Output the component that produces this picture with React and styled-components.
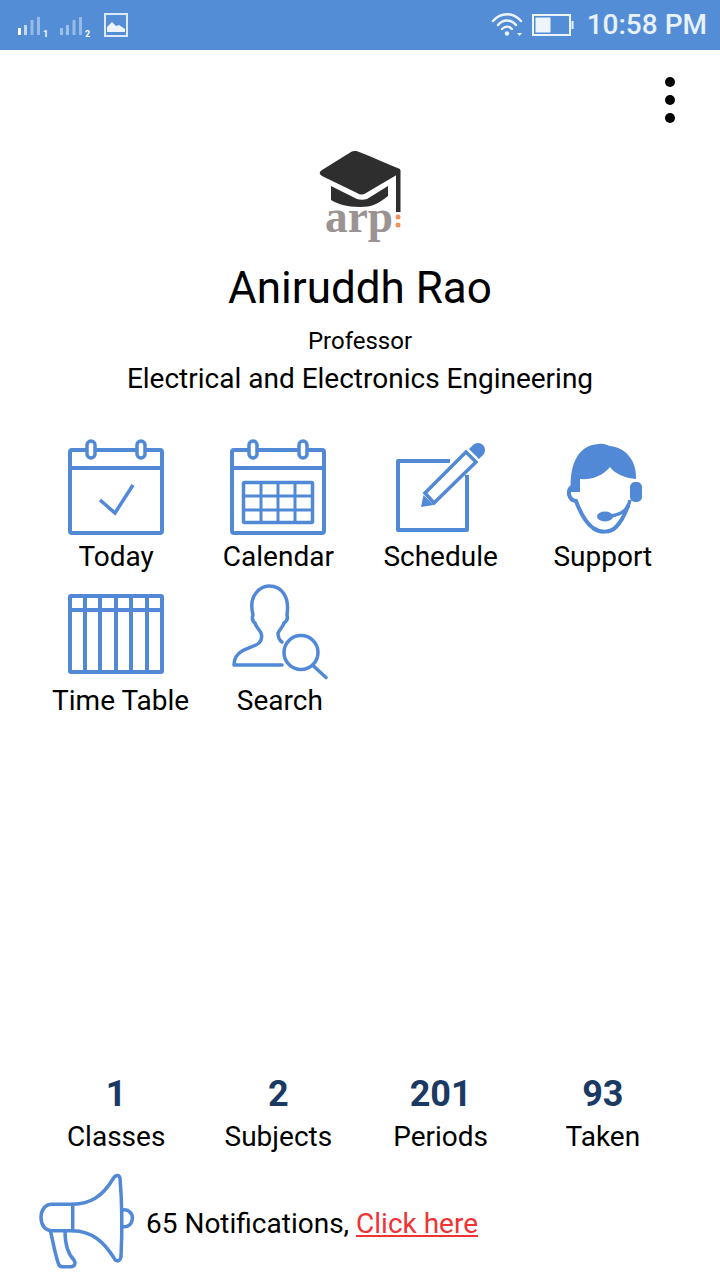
import React from 'react'
import styled, { createGlobalStyle } from 'styled-components'

const BLUE = '#5289d6'

const GlobalStyle = createGlobalStyle`
  html, body {
    margin: 0;
    background: #fff;
  }
  body {
    font-family: Roboto, "Liberation Sans", sans-serif;
    color: #000;
  }
`

const Page = styled.div`
  width: 720px;
  height: 1280px;
  display: flex;
  flex-direction: column;
  overflow: hidden;
`

const StatusBar = styled.div`
  height: 50px;
  flex: none;
  background: #538dd6;
  display: flex;
  align-items: center;
  justify-content: space-between;
  padding: 0 13px 0 18px;
  color: #e8f1fb;
`

const StatusGroup = styled.div`
  display: flex;
  align-items: center;
`

const Clock = styled.span`
  font-size: 28px;
  font-weight: 500;
  line-height: 50px;
  margin-left: 13px;
`

const SignalIcon = styled.svg`
  width: 32px;
  height: 34px;
  display: block;
  margin-right: ${(p) => p.$gap}px;
  fill: #fff;
`

const TopRow = styled.div`
  height: 98px;
  flex: none;
  box-sizing: border-box;
  padding: 27px 45px 0 0;
  display: flex;
  justify-content: flex-end;
`

const Kebab = styled.div`
  display: flex;
  flex-direction: column;
  gap: 8px;
`

const Dot = styled.span`
  width: 10px;
  height: 10px;
  border-radius: 50%;
  background: #000;
`

const Profile = styled.div`
  display: flex;
  flex-direction: column;
  align-items: center;
  flex: none;
`

const Name = styled.h1`
  margin: 19px 0 0;
  font-size: 44px;
  line-height: 50px;
  font-weight: 400;
`

const Role = styled.div`
  margin-top: 14px;
  font-size: 24px;
  line-height: 28px;
`

const Department = styled.div`
  margin-top: 7px;
  font-size: 28px;
  line-height: 34px;
`

const Grid = styled.div`
  margin: 42px 0 0 35px;
  width: 649px;
  display: grid;
  grid-template-columns: repeat(4, 1fr);
  row-gap: 9px;
  flex: none;
`

const Tile = styled.div`
  display: flex;
  flex-direction: column;
  align-items: center;
`

const TileIcon = styled.svg`
  width: 100px;
  height: 100px;
  display: block;
  fill: none;
  stroke: ${BLUE};
  stroke-width: 4;
`

const TileLabel = styled.div`
  margin: 3px 0 0 ${(p) => p.$shift || 0}px;
  font-size: 28px;
  line-height: 32px;
  white-space: nowrap;
`

const Stats = styled.div`
  margin: auto 0 0 35px;
  width: 649px;
  display: grid;
  grid-template-columns: repeat(4, 1fr);
  flex: none;
`

const Stat = styled.div`
  display: flex;
  flex-direction: column;
  align-items: center;
`

const StatValue = styled.div`
  font-size: 36px;
  line-height: 40px;
  font-weight: 700;
  color: #1b3a63;
`

const StatLabel = styled.div`
  margin-top: 7px;
  font-size: 28px;
  line-height: 32px;
`

const Footer = styled.div`
  margin-top: 19px;
  padding: 0 0 10px 38px;
  display: flex;
  align-items: center;
  flex: none;
`

const Megaphone = styled.svg`
  width: 98px;
  height: 98px;
  display: block;
  fill: none;
  stroke: ${BLUE};
  stroke-width: 3.5;
  stroke-linejoin: round;
  stroke-linecap: round;
`

const Notice = styled.div`
  margin: 6px 0 0 10px;
  font-size: 28px;
  line-height: 32px;
`

const NoticeLink = styled.a`
  color: #f03333;
  text-decoration: underline;
`

const Signal = ({ digit, faded, gap }) => (
  <SignalIcon viewBox="0 0 32 34" $gap={gap}>
    <rect x="0" y="20" width="3" height="7" opacity={faded ? 0.45 : 1} />
    <rect x="6" y="17" width="3" height="10" opacity={faded ? 0.45 : 0.65} />
    <rect x="12.5" y="12" width="3" height="15" opacity="0.4" />
    <rect x="19" y="9" width="3" height="18" opacity="0.4" />
    <text x="25" y="29" fontSize="9" fontWeight="700" fontFamily="Roboto">{digit}</text>
  </SignalIcon>
)

const ImageGlyph = () => (
  <svg width="24" height="24" viewBox="0 0 24 24" style={{ marginLeft: 2 }}>
    <rect x="1" y="1" width="22" height="22" fill="none" stroke="#dbe8f8" strokeWidth="2" />
    <path d="M3 19 V14 L8 9 L12 13 L15 12 L21 16 V19 Z" fill="#eef4fc" />
  </svg>
)

const Wifi = () => (
  <svg width="32" height="24" viewBox="0 0 32 24" fill="none" stroke="#eef4fc" strokeWidth="2.4" strokeLinecap="round">
    <path d="M2 8 C10 -1 22 -1 30 8" />
    <path d="M7 12 C12 6 20 6 25 12" />
    <path d="M11 16 C14 13 18 13 21 16" />
    <circle cx="16" cy="20.5" r="2.2" fill="#eef4fc" stroke="none" />
    <path d="M26 20 H31 L28.5 23 Z" fill="#eef4fc" stroke="none" />
  </svg>
)

const Battery = () => (
  <svg width="42" height="22" viewBox="0 0 42 22" style={{ marginLeft: 9 }}>
    <rect x="1" y="1" width="37" height="20" fill="none" stroke="#eef4fc" strokeWidth="2" />
    <rect x="3.5" y="3.5" width="15" height="15" fill="#eef4fc" />
    <rect x="39.5" y="7" width="2" height="8" fill="#eef4fc" />
  </svg>
)

const Logo = () => (
  <svg width="90" height="96" viewBox="315 148 90 96" style={{ display: 'block' }}>
    <path
      d="M355 151 C358 151 362 153 400 169 L400 173 L366 193 C363 195 360 195 357 193 L322 176 C319 174 319 172 322 170 L351 152 C352 151 354 151 355 151 Z"
      fill="#2e2e2e"
    />
    <path d="M331 186 L357 199 C360 200 364 200 367 199 L388 186 V196 C378 204 372 207 360 207 C346 207 338 204 331 200 Z" fill="#2e2e2e" />
    <rect x="396" y="170" width="4.5" height="42" fill="#2e2e2e" />
    <circle cx="398" cy="217" r="2.5" fill="#ef8f5f" />
    <circle cx="398" cy="225" r="2.5" fill="#ef8f5f" />
    <text
      x="325"
      y="232"
      fontFamily="Liberation Serif"
      fontWeight="700"
      fontSize="47"
      textLength="68"
      lengthAdjust="spacingAndGlyphs"
      fill="#9b9292"
    >
      arp
    </text>
  </svg>
)

const TodayIcon = () => (
  <TileIcon viewBox="0 0 100 100">
    <rect x="4" y="12" width="92" height="83" rx="2" />
    <path d="M4 30 H96" />
    <rect x="21" y="3" width="8" height="17" rx="4" fill="#fff" strokeWidth="3.5" />
    <rect x="71" y="3" width="8" height="17" rx="4" fill="#fff" strokeWidth="3.5" />
    <path d="M34 62 L49 75 L67 47" strokeWidth="3.5" />
  </TileIcon>
)

const CalendarIcon = () => (
  <TileIcon viewBox="0 0 100 100">
    <rect x="4" y="12" width="92" height="83" rx="2" />
    <path d="M4 30 H96" />
    <rect x="21" y="3" width="8" height="17" rx="4" fill="#fff" strokeWidth="3.5" />
    <rect x="71" y="3" width="8" height="17" rx="4" fill="#fff" strokeWidth="3.5" />
    <rect x="15.5" y="44.5" width="69" height="40" rx="1" strokeWidth="3.5" />
    <path d="M33 44.5 V84.5 M50 44.5 V84.5 M67 44.5 V84.5 M15.5 58 H84.5 M15.5 72 H84.5" strokeWidth="3" />
  </TileIcon>
)

const ScheduleIcon = () => (
  <TileIcon viewBox="0 0 100 100">
    <path d="M59 23 H7 V92 H76 V37" strokeLinejoin="round" />
    <path d="M34 55 L75 14 L85 24 L43 65 Z" strokeWidth="3.5" />
    <path d="M30 69 L32.5 57 L42.5 67 Z" fill={BLUE} stroke="none" />
    <path d="M78 11 L82 7 A7 7 0 0 1 92 17 L88 21 Z" fill={BLUE} stroke="none" />
  </TileIcon>
)

const SupportIcon = () => (
  <TileIcon viewBox="0 0 100 100">
    <path
      d="M18 54 C16 30 23 7 46 6 C51 5 53 7 57 8 C74 10 84 24 83 41 C72 40 62 36 57 29 C50 38 38 42 27 41 L27 54 Z"
      fill={BLUE}
      stroke="none"
    />
    <path d="M19 49 C14 52 15 62 23 63 C27 74 32 84 40 90 C47 95 57 95 63 89 C68 84 72 76 75 68" strokeWidth="4" strokeLinecap="round" />
    <rect x="77" y="44" width="12" height="20" rx="5" fill={BLUE} stroke="none" />
    <path d="M77 62 C75 72 69 76 58 78" strokeWidth="3.5" />
    <ellipse cx="52" cy="78.5" rx="8" ry="5" fill={BLUE} stroke="none" />
  </TileIcon>
)

const TimeTableIcon = () => (
  <TileIcon viewBox="0 0 100 100">
    <rect x="4" y="14" width="92" height="76" rx="1" />
    <path d="M4 28 H96 M19 14 V90 M34 14 V90 M50 14 V90 M65 14 V90 M81 14 V90" />
  </TileIcon>
)

const SearchIcon = () => (
  <TileIcon viewBox="0 0 100 100" strokeLinecap="round" strokeLinejoin="round">
    <path
      d="M54 83 H6 C6 76 9 72 14 69 C19 66 26 65 31 61 C34 58 34 54 33 51 C31 47 28 45 27 41 C24 39 24 36 25 33 C23 25 23 17 28 11 C32 6 36 4 41 4 C47 4 53 7 56 12 C60 18 60 26 59 33 C60 36 59 39 56 41 C55 45 52 47 50 51 C50 55 51 58 54 60"
      strokeWidth="3.5"
    />
    <circle cx="73" cy="70.5" r="17" strokeWidth="3.5" />
    <path d="M85.5 84 L98 95.5" strokeWidth="3.5" />
  </TileIcon>
)

const tiles = [
  { label: 'Today', Icon: TodayIcon },
  { label: 'Calendar', Icon: CalendarIcon },
  { label: 'Schedule', Icon: ScheduleIcon },
  { label: 'Support', Icon: SupportIcon },
  { label: 'Time Table', Icon: TimeTableIcon, shift: 9 },
  { label: 'Search', Icon: SearchIcon, shift: 3 },
]

const stats = [
  { value: 1, label: 'Classes' },
  { value: 2, label: 'Subjects' },
  { value: 201, label: 'Periods' },
  { value: 93, label: 'Taken' },
]

export default function App() {
  return (
    <Page>
      <GlobalStyle />
      <StatusBar>
        <StatusGroup>
          <Signal digit="1" gap={10} />
          <Signal digit="2" faded gap={10} />
          <ImageGlyph />
        </StatusGroup>
        <StatusGroup>
          <Wifi />
          <Battery />
          <Clock>10:58 PM</Clock>
        </StatusGroup>
      </StatusBar>
      <TopRow>
        <Kebab>
          <Dot />
          <Dot />
          <Dot />
        </Kebab>
      </TopRow>
      <Profile>
        <Logo />
        <Name>Aniruddh Rao</Name>
        <Role>Professor</Role>
        <Department>Electrical and Electronics Engineering</Department>
      </Profile>
      <Grid>
        {tiles.map(({ label, Icon, shift }) => (
          <Tile key={label}>
            <Icon />
            <TileLabel $shift={shift}>{label}</TileLabel>
          </Tile>
        ))}
      </Grid>
      <Stats>
        {stats.map(({ value, label }) => (
          <Stat key={label}>
            <StatValue>{value}</StatValue>
            <StatLabel>{label}</StatLabel>
          </Stat>
        ))}
      </Stats>
      <Footer>
        <Megaphone viewBox="0 0 98 98">
          <path d="M34.7 32.3 H14 C7 32.3 3 38 3 45.3 C3 53 7 58.7 14 58.7 H34.7 Z" />
          <path d="M34.7 32.3 C52 32 64 25 75 7 C77 3 81 2 82 6 C84 30 84 65 83 85 C82 90 78 90 76 86 C66 70 54 59 34.7 58.7" />
          <path d="M12.7 60 C15 70 17 82 20.3 91.3 C21 94 22 94.7 24 94.7 H33 C37 94.7 38 91 36 88 C30 82 27 73 27 58.7" />
          <path d="M85 38 C91 37 95 42 94.3 46.5 C94 52 90 55.5 85 54.7" />
        </Megaphone>
        <Notice>
          65 Notifications, <NoticeLink href="#">Click here</NoticeLink>
        </Notice>
      </Footer>
    </Page>
  )
}
